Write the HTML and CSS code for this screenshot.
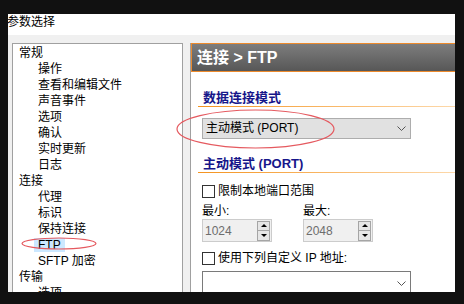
FILE: index.html
```html
<!DOCTYPE html>
<html>
<head>
    <title>参数选择</title>
    <link rel="stylesheet" href="styles.css">
</head>
<body>
    <div class="window">
        <div class="titlebar">参数选择</div>
        <div class="content">
            <ul class="tree">
                <li>常规</li>
                <li class="child">操作</li>
                <li class="child">查看和编辑文件</li>
                <li class="child">声音事件</li>
                <li class="child">选项</li>
                <li class="child">确认</li>
                <li class="child">实时更新</li>
                <li class="child">日志</li>
                <li>连接</li>
                <li class="child">代理</li>
                <li class="child">标识</li>
                <li class="child">保持连接</li>
                <li class="child"><span class="selected">FTP</span></li>
                <li class="child">SFTP 加密</li>
                <li>传输</li>
                <li class="child">选项</li>
            </ul>
            <div class="panel">
                <div class="panel-head">连接 &gt; FTP</div>
                <div class="section">数据连接模式</div>
                <div class="select">
                    <span>主动模式 (PORT)</span>
                    <svg width="9" height="5" viewBox="0 0 9 5"><polyline points="0.5,0.5 4.5,4.5 8.5,0.5" fill="none" stroke="#555" stroke-width="1"/></svg>
                </div>
                <div class="section">主动模式 (PORT)</div>
                <div class="check"><span class="box"></span>限制本地端口范围</div>
                <div class="ports">
                    <div class="port">
                        <div class="port-label">最小:</div>
                        <div class="spin">
                            <span>1024</span>
                            <div class="spin-btns"><b class="up"></b><b class="down"></b></div>
                        </div>
                    </div>
                    <div class="port">
                        <div class="port-label">最大:</div>
                        <div class="spin">
                            <span>2048</span>
                            <div class="spin-btns"><b class="up"></b><b class="down"></b></div>
                        </div>
                    </div>
                </div>
                <div class="check second"><span class="box"></span>使用下列自定义 IP 地址:</div>
                <div class="select blank">
                    <span></span>
                    <svg width="9" height="5" viewBox="0 0 9 5"><polyline points="0.5,0.5 4.5,4.5 8.5,0.5" fill="none" stroke="#555" stroke-width="1"/></svg>
                </div>
            </div>
        </div>
        <!-- red marks drawn over the screenshot -->
        <svg class="marks" width="447" height="278">
            <ellipse cx="247.5" cy="115" rx="78.5" ry="19" fill="none" stroke="#e5595f" stroke-width="1.2"/>
            <ellipse cx="51" cy="229.5" rx="37" ry="5.5" fill="none" stroke="#e5595f" stroke-width="1.2"/>
        </svg>
    </div>
</body>
</html>
```

FILE: styles.css
```css
body { margin: 0; background: #111; font-family: "Liberation Sans", "Noto Sans CJK SC", sans-serif; font-size: 12px; color: #000; }
.window { position: relative; margin: 14px 0 0 8px; width: 447px; height: 278px; background: #f0f0f0; overflow: hidden; }
.titlebar { height: 21px; line-height: 17px; background: #fff; text-indent: -1px; }
.content { display: flex; gap: 7px; padding: 8px 0 0 4px; }
.tree { box-sizing: border-box; width: 171px; height: 260px; margin: 0; padding: 1px 0 0 6px; list-style: none; background: #fff; border: 1px solid #a0a0a0; }
.tree li { height: 16px; line-height: 16px; white-space: nowrap; }
.tree .child { padding-left: 19px; }
.selected { display: inline-block; margin-left: -4px; padding: 0 4px; line-height: 14px; background: #cce8ff; }
.panel { flex: 1; height: 260px; background: #fff; border-left: 1px solid #a0a0a0; }
.panel-head { box-sizing: border-box; height: 29px; padding-left: 5px; line-height: 27px; font-size: 16px; font-weight: bold; color: #fff; border: 1px solid #ec8a2c; border-right: none; background: linear-gradient(#7d7d7d, #575757); }
.section { height: 17px; margin: 17px 0 0 7px; padding-left: 5px; line-height: 17px; font-size: 13px; font-weight: bold; color: #16168a; border-bottom: 1px solid #f39a3a; border-image: linear-gradient(to right, #f4931f, #fdd9ab) 1; }
.section + .check { margin-top: 10px; }
.select { box-sizing: border-box; display: flex; align-items: center; justify-content: space-between; width: 209px; height: 21px; margin: 11px 0 0 11px; padding: 0 4px 0 3px; border: 1px solid #adadad; background: #e1e1e1; line-height: 19px; }
.select + .section { margin-top: 16px; }
.select.blank { height: 24px; margin-top: 5px; background: #fff; border-color: #7a7a7a; }
.check { display: flex; align-items: center; height: 16px; margin-left: 11px; line-height: 16px; }
.check.second { margin-top: 8px; }
.box { box-sizing: border-box; width: 13px; height: 13px; margin-right: 3px; border: 1px solid #333; background: #fff; }
.ports { display: flex; gap: 31px; margin: 5px 0 0 11px; }
.port-label { height: 14px; line-height: 14px; margin-bottom: 1px; }
.spin { box-sizing: border-box; display: flex; align-items: center; justify-content: space-between; width: 70px; height: 23px; padding: 0 1px 0 2px; border: 1px solid #cccccc; background: #f0f0f0; color: #6d6d6d; }
.spin-btns { display: flex; flex-direction: column; width: 13px; }
.spin-btns b { box-sizing: border-box; display: flex; align-items: center; justify-content: center; height: 10px; border: 1px solid #a5a5a5; background: #e6e6e6; }
.spin-btns b + b { margin-top: -1px; height: 11px; }
.spin-btns b::after { content: ""; border-left: 3px solid transparent; border-right: 3px solid transparent; }
.spin-btns .up::after { border-bottom: 3px solid #000; }
.spin-btns .down::after { border-top: 3px solid #000; }
.marks { position: absolute; top: 0; left: 0; pointer-events: none; }
```
